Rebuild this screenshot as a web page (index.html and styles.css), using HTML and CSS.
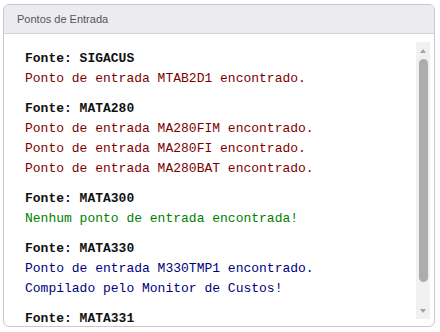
FILE: index.html
```html
<!DOCTYPE html>
<html lang="pt-BR">
<head>
    <meta charset="UTF-8">
    <meta name="viewport" content="width=device-width, initial-scale=1.0">
    <title>Pontos de Entrada</title>
    <link rel="stylesheet" href="styles.css">
</head>
<body>
    <div class="panel">
        <div class="panel-header">Pontos de Entrada</div>
        <div class="panel-body">
            <div class="log">
                <div class="block">
                    <div class="source">Fonte: SIGACUS</div>
                    <div class="msg found">Ponto de entrada MTAB2D1 encontrado.</div>
                </div>
                <div class="block">
                    <div class="source">Fonte: MATA280</div>
                    <div class="msg found">Ponto de entrada MA280FIM encontrado.</div>
                    <div class="msg found">Ponto de entrada MA280FI encontrado.</div>
                    <div class="msg found">Ponto de entrada MA280BAT encontrado.</div>
                </div>
                <div class="block">
                    <div class="source">Fonte: MATA300</div>
                    <div class="msg none">Nenhum ponto de entrada encontrada!</div>
                </div>
                <div class="block">
                    <div class="source">Fonte: MATA330</div>
                    <div class="msg monitor">Ponto de entrada M330TMP1 encontrado.</div>
                    <div class="msg monitor">Compilado pelo Monitor de Custos!</div>
                </div>
                <div class="block">
                    <div class="source">Fonte: MATA331</div>
                </div>
            </div>
            <div class="scrollbar">
                <div class="arrow up"></div>
                <div class="track"><div class="thumb"></div></div>
                <div class="arrow down"></div>
            </div>
        </div>
    </div>
</body>
</html>
```

FILE: styles.css
```css
body {
    margin: 0;
    padding: 4px 0 0 3px;
    background-color: #fff;
    font-family: "Liberation Sans", Arial, sans-serif;
}
.panel {
    width: 430px;
    border: 1px solid #c9c9cc;
    border-radius: 6px;
    overflow: hidden;
}
.panel-header {
    height: 28px;
    line-height: 29px;
    padding-left: 13px;
    font-size: 11px;
    color: #555;
    background-color: #ececf0;
    border-bottom: 1px solid #d4d4d8;
}
.panel-body {
    display: flex;
    height: 292px;
    padding: 0 4px 0 0;
}
.log {
    flex: 1;
    overflow: hidden;
    padding: 15px 0 0 21px;
    font-family: "Liberation Mono", "Courier New", monospace;
    font-size: 13px;
    line-height: 20px;
}
.block {
    margin-bottom: 10px;
    white-space: nowrap;
}
.source {
    font-weight: bold;
    color: #111;
}
.found {
    color: #800000;
}
.none {
    color: #008000;
}
.monitor {
    color: #000080;
}
.scrollbar {
    width: 14px;
    margin: 8px 0 7px;
    display: flex;
    flex-direction: column;
    background-color: #f1f1f1;
}
.arrow {
    height: 17px;
    display: flex;
    align-items: center;
    justify-content: center;
}
.arrow::before {
    content: "";
    border-left: 3.5px solid transparent;
    border-right: 3.5px solid transparent;
}
.arrow.up::before {
    border-bottom: 4px solid #a3a3a3;
}
.arrow.down::before {
    border-top: 4px solid #a3a3a3;
}
.track {
    flex: 1;
    padding: 0 2px 0 3px;
}
.thumb {
    height: 223px;
    background-color: #adadad;
    border-radius: 5px;
}
```
